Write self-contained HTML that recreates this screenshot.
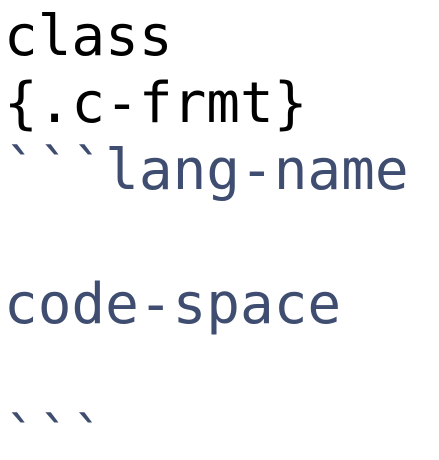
<!DOCTYPE html>
<html><head><style>
html,body{margin:0;padding:0;background:#fff;width:439px;height:460px;overflow:hidden}
pre{margin:0;padding:3px 0 0 4px;font-family:"DejaVu Sans Mono","Liberation Mono",monospace;font-size:56px;line-height:67px;color:#000}
.b{color:#3f4d70}
</style></head><body>
<pre>class
{.c-frmt}
<span class="b">&#96;&#96;&#96;lang-name

code-space

&#96;&#96;&#96;</span></pre>
</body></html>
